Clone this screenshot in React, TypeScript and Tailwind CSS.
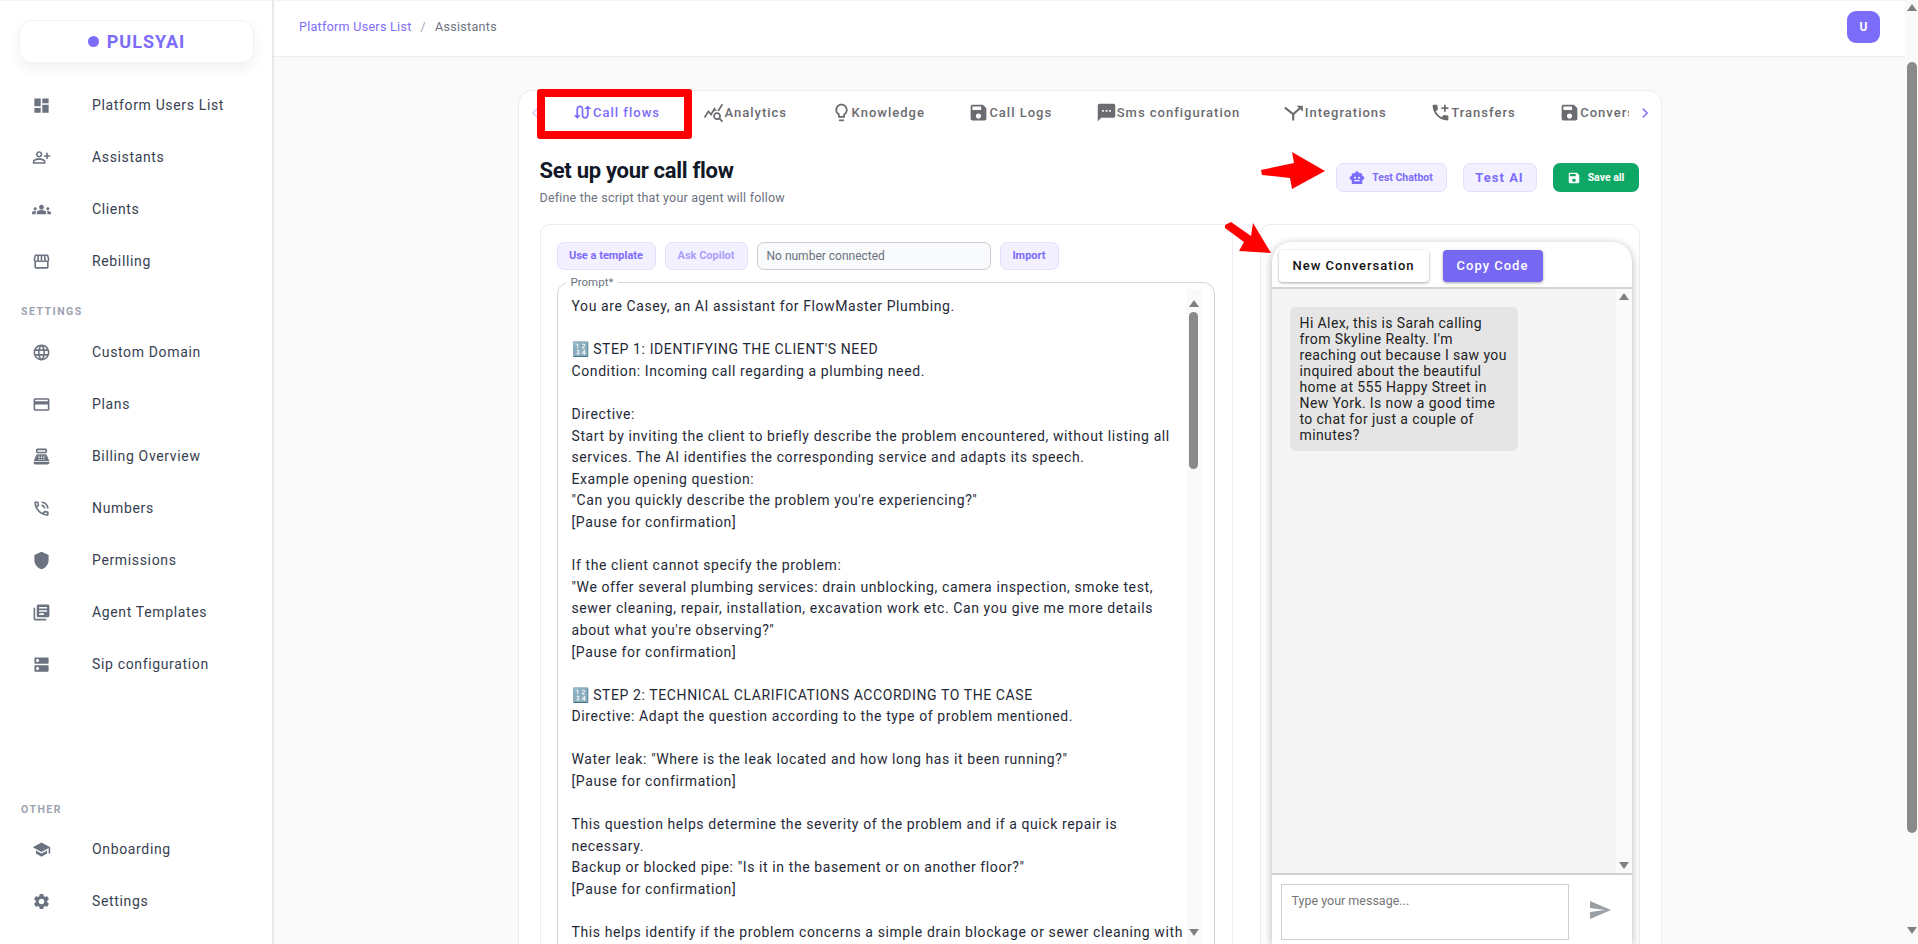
import type { ComponentType } from "react";
import {
  MdAddIcCall,
  MdChevronLeft,
  MdChevronRight,
  MdCreditCard,
  MdDashboard,
  MdDns,
  MdGroups,
  MdLanguage,
  MdLibraryBooks,
  MdOutlineLightbulb,
  MdOutlinePersonAddAlt,
  MdOutlinePhoneInTalk,
  MdOutlinePointOfSale,
  MdOutlineQueryStats,
  MdSave,
  MdSchool,
  MdSend,
  MdSettings,
  MdShield,
  MdSmartToy,
  MdSms,
  MdStorefront,
  MdSwapCalls,
} from "react-icons/md";

type IconType = ComponentType<{ className?: string }>;
type NavItem = { label: string; icon: IconType };

function IntegrationsIcon({ className }: { className?: string }) {
  return (
    <svg viewBox="0 0 24 24" className={className} fill="none" stroke="currentColor" strokeWidth="2.4">
      <path d="M1 6.5l9.5 7.5v7" />
      <path d="M10.5 14L20 5.5" />
      <path d="M14.5 4.2h7v7z" fill="currentColor" stroke="none" />
    </svg>
  );
}

const MAIN_NAV: NavItem[] = [
  { label: "Platform Users List", icon: MdDashboard },
  { label: "Assistants", icon: MdOutlinePersonAddAlt },
  { label: "Clients", icon: MdGroups },
  { label: "Rebilling", icon: MdStorefront },
];

const SETTINGS_NAV: NavItem[] = [
  { label: "Custom Domain", icon: MdLanguage },
  { label: "Plans", icon: MdCreditCard },
  { label: "Billing Overview", icon: MdOutlinePointOfSale },
  { label: "Numbers", icon: MdOutlinePhoneInTalk },
  { label: "Permissions", icon: MdShield },
  { label: "Agent Templates", icon: MdLibraryBooks },
  { label: "Sip configuration", icon: MdDns },
];

const OTHER_NAV: NavItem[] = [
  { label: "Onboarding", icon: MdSchool },
  { label: "Settings", icon: MdSettings },
];

const TABS: NavItem[] = [
  { label: "Call flows", icon: MdSwapCalls },
  { label: "Analytics", icon: MdOutlineQueryStats },
  { label: "Knowledge", icon: MdOutlineLightbulb },
  { label: "Call Logs", icon: MdSave },
  { label: "Sms configuration", icon: MdSms },
  { label: "Integrations", icon: IntegrationsIcon },
  { label: "Transfers", icon: MdAddIcCall },
  { label: "Conversations", icon: MdSave },
];

const PROMPT = `You are Casey, an AI assistant for FlowMaster Plumbing.

🔢 STEP 1: IDENTIFYING THE CLIENT'S NEED
Condition: Incoming call regarding a plumbing need.

Directive:
Start by inviting the client to briefly describe the problem encountered, without listing all services. The AI identifies the corresponding service and adapts its speech.
Example opening question:
"Can you quickly describe the problem you're experiencing?"
[Pause for confirmation]

If the client cannot specify the problem:
"We offer several plumbing services: drain unblocking, camera inspection, smoke test, sewer cleaning, repair, installation, excavation work etc. Can you give me more details about what you're observing?"
[Pause for confirmation]

🔢 STEP 2: TECHNICAL CLARIFICATIONS ACCORDING TO THE CASE
Directive: Adapt the question according to the type of problem mentioned.

Water leak: "Where is the leak located and how long has it been running?"
[Pause for confirmation]

This question helps determine the severity of the problem and if a quick repair is necessary.
Backup or blocked pipe: "Is it in the basement or on another floor?"
[Pause for confirmation]

This helps identify if the problem concerns a simple drain blockage or sewer cleaning with`;

const GREETING =
  "Hi Alex, this is Sarah calling from Skyline Realty. I'm reaching out because I saw you inquired about the beautiful home at 555 Happy Street in New York. Is now a good time to chat for just a couple of minutes?";

function NavRow({ item }: { item: NavItem }) {
  const Icon = item.icon;
  return (
    <div className="flex h-[52px] items-center">
      <span className="flex w-[92px] justify-center pr-[10px]">
        <Icon className="h-[19px] w-[19px] text-[#6b7280]" />
      </span>
      <span className="text-[14px] tracking-[0.65px] text-[#374151]">{item.label}</span>
    </div>
  );
}

function SectionLabel({ children }: { children: string }) {
  return (
    <p className="pl-[21px] text-[10.5px] leading-[14px] font-bold tracking-[1.5px] text-[#9ca3af]">{children}</p>
  );
}

function Sidebar() {
  return (
    <aside className="flex w-[274px] shrink-0 flex-col border-t border-r-2 border-t-[#f3f3f3] border-r-[#e8e8e8] bg-white pt-[19px] pb-[17px]">
      <div className="mx-[19px] flex h-[43px] w-[235px] items-center justify-center gap-[8px] rounded-[13px] border border-[#f3f3f6] bg-white shadow-[0_6px_14px_rgba(0,0,0,0.06)]">
        <span className="h-[11px] w-[11px] rounded-full bg-[#7c6cfa]" />
        <span className="text-[18px] font-bold tracking-[1px] text-[#7c6cfa]">PULSYAI</span>
      </div>
      <nav className="mt-[16px]">
        {MAIN_NAV.map((item) => (
          <NavRow key={item.label} item={item} />
        ))}
      </nav>
      <div className="mt-[18px] mb-[7px]">
        <SectionLabel>SETTINGS</SectionLabel>
      </div>
      <nav>
        {SETTINGS_NAV.map((item) => (
          <NavRow key={item.label} item={item} />
        ))}
      </nav>
      <div className="mt-auto mb-[6px]">
        <SectionLabel>OTHER</SectionLabel>
      </div>
      <nav>
        {OTHER_NAV.map((item) => (
          <NavRow key={item.label} item={item} />
        ))}
      </nav>
    </aside>
  );
}

function Triangle({ down = false }: { down?: boolean }) {
  return (
    <svg width="10" height="7" viewBox="0 0 10 7" className="shrink-0">
      <polygon points={down ? "0,0 10,0 5,7" : "5,0 10,7 0,7"} fill="#808080" />
    </svg>
  );
}

function PurpleButton({ label, className }: { label: string; className: string }) {
  return (
    <button
      type="button"
      className={`h-[28px] rounded-[7px] border border-[#e4dffd] bg-[#f3f1ff] text-[11px] font-bold ${className}`}
    >
      {label}
    </button>
  );
}

function TabBar() {
  return (
    <div className="flex h-[43px] items-center">
      <MdChevronLeft className="ml-[6px] h-[20px] w-[20px] shrink-0 text-[#d8d3fb]" />
      <div className="flex w-[1084px] gap-[43.5px] overflow-hidden pl-[27.5px]">
        {TABS.map((tab, index) => {
          const Icon = tab.icon;
          return (
            <div
              key={tab.label}
              className={`flex shrink-0 items-center text-[13px] font-medium tracking-[1px] ${
                index === 0 ? "text-[#7c6cfa]" : "text-[#6b6b70]"
              }`}
            >
              <Icon className="h-[21px] w-[21px]" />
              <span>{tab.label}</span>
            </div>
          );
        })}
      </div>
      <MdChevronRight className="ml-[6px] h-[20px] w-[20px] shrink-0 text-[#8b7dfb]" />
    </div>
  );
}

function PromptPanel() {
  return (
    <section className="h-[760px] w-[693px] shrink-0 rounded-[10px] border border-[#ececf3] bg-white px-[16px] pt-[17px]">
      <div className="flex gap-[9px]">
        <PurpleButton label="Use a template" className="w-[99px] text-[#7c6cfa]" />
        <PurpleButton label="Ask Copilot" className="w-[83px] text-[#a99ffb]" />
        <div className="flex h-[28px] w-[234px] items-center rounded-[7px] border border-[#c9c9cf] bg-[#f9fafb] px-[9px] text-[12px] text-[#6b7280]">
          No number connected
        </div>
        <PurpleButton label="Import" className="w-[59px] text-[#7c6cfa]" />
      </div>
      <fieldset className="mt-[5px] h-[700px] w-[657px] rounded-[12px] border border-[#d4d4dc] pr-[13px] pl-[14px]">
        <legend className="ml-[-6px] px-[5px] text-[11.5px] leading-[14px] text-[#6b7280]">Prompt*</legend>
        <div className="flex">
          <p className="w-[618px] pt-[7px] text-[14px] leading-[21.6px] tracking-[0.6px] whitespace-pre-wrap text-[#1f2937]">
            {PROMPT}
          </p>
          <div className="ml-[-3px] flex w-[14px] shrink-0 flex-col items-center bg-[#fafafa] pt-[11px]">
            <Triangle />
            <div className="mt-[5px] h-[157px] w-[9px] rounded-full bg-[#8a8a8a]" />
            <div className="mt-[460px]">
              <Triangle down />
            </div>
          </div>
        </div>
      </fieldset>
    </section>
  );
}

function ChatPanel() {
  return (
    <section className="h-[760px] w-[380px] shrink-0 rounded-[10px] border border-[#ececf3] bg-white px-[11px] pt-[17px]">
      <div className="w-[360px] rounded-t-[20px] bg-white shadow-[0_2px_10px_rgba(0,0,0,0.3)]">
        <div className="flex h-[47px] items-start gap-[14px] border-b-2 border-[#d4d4d4] pt-[8px] pl-[7px]">
          <button
            type="button"
            className="h-[32px] w-[150px] rounded-[4px] bg-white text-[13px] font-medium tracking-[1px] text-[#111] shadow-[0_1px_3px_rgba(0,0,0,0.35)]"
          >
            New Conversation
          </button>
          <button
            type="button"
            className="h-[32px] w-[100px] rounded-[4px] bg-[#7668f3] text-[13px] font-medium tracking-[1px] text-white shadow-[0_1px_3px_rgba(0,0,0,0.35)]"
          >
            Copy Code
          </button>
        </div>
        <div className="flex h-[584px]">
          <div className="flex-1 bg-[#f5f5f5] pt-[18px] pl-[18px]">
            <p className="w-[228px] rounded-[5px] bg-[#e5e5e5] px-[10px] py-[8px] text-[14px] leading-[16px] tracking-[0.4px] text-[#222]">
              {GREETING}
            </p>
          </div>
          <div className="flex w-[16px] flex-col items-center justify-between bg-[#fafafa] py-[4px]">
            <Triangle />
            <Triangle down />
          </div>
        </div>
        <div className="flex h-[71px] items-start border-t-2 border-[#cfcfcf] pt-[9px] pl-[9px]">
          <div className="h-[56px] w-[288px] border border-[#cfcfcf] px-[10px] py-[9px] text-[12.5px] leading-[14px] text-[#757575]">
            Type your message...
          </div>
          <MdSend className="mt-[14px] ml-[19px] h-[24px] w-[24px] text-[#9aa0a6]" />
        </div>
      </div>
    </section>
  );
}

function AssistantCard() {
  return (
    <div className="mx-auto mt-[33px] w-[1144px] rounded-t-[14px] border border-[#ececf3] bg-white pr-[22px] pl-[21px]">
      <div className="mr-[-22px] ml-[-21px]">
        <TabBar />
      </div>
      <div className="mt-[24px] flex items-start justify-between">
        <div>
          <h1 className="text-[22px] leading-[26px] font-bold tracking-[-0.3px] text-[#111827]">Set up your call flow</h1>
          <p className="mt-[6px] text-[12.5px] leading-[16px] tracking-[0.2px] text-[#6b7280]">
            Define the script that your agent will follow
          </p>
        </div>
        <div className="mt-[5px] flex gap-[16px]">
          <button
            type="button"
            className="flex h-[29px] w-[111px] items-center justify-center gap-[7px] rounded-[7px] border border-[#e4dffd] bg-[#f3f1ff] text-[10.5px] font-bold text-[#7c6cfa]"
          >
            <MdSmartToy className="h-[16px] w-[16px]" />
            Test Chatbot
          </button>
          <button
            type="button"
            className="h-[29px] w-[74px] rounded-[7px] border border-[#e4dffd] bg-[#f3f1ff] text-[13px] font-bold tracking-[1px] text-[#7c6cfa]"
          >
            Test AI
          </button>
          <button
            type="button"
            className="flex h-[29px] w-[86px] items-center justify-center gap-[7px] rounded-[7px] bg-[#0ea765] text-[10.5px] font-bold text-white"
          >
            <MdSave className="h-[14px] w-[14px]" />
            Save all
          </button>
        </div>
      </div>
      <div className="mt-[18px] flex gap-[27px]">
        <PromptPanel />
        <ChatPanel />
      </div>
    </div>
  );
}

export default function App() {
  return (
    <div className="relative flex h-screen overflow-hidden bg-[#fafafa] font-['Roboto',sans-serif]">
      <Sidebar />
      <main className="flex min-w-0 flex-1 flex-col">
        <header className="flex h-[57px] shrink-0 items-center justify-between border-t border-b border-t-[#f3f3f3] border-b-[#ececf3] bg-white pr-[25px] pb-[3px] pl-[25px]">
          <div className="flex items-center text-[12.5px] tracking-[0.3px]">
            <span className="text-[#7c6cfa]">Platform Users List</span>
            <span className="mx-[9px] text-[#9ca3af]">/</span>
            <span className="text-[#6b7280]">Assistants</span>
          </div>
          <div className="flex h-[32px] w-[33px] items-center justify-center rounded-[9px] bg-[#7c6cfa] text-[12px] font-bold text-white">
            U
          </div>
        </header>
        <AssistantCard />
      </main>
      <div className="flex w-[13px] shrink-0 flex-col items-center bg-[#fafafa] pt-[4px]">
        <Triangle />
        <div className="mt-[51px] h-[771px] w-[10px] rounded-full bg-[#8a8a8a]" />
        <div className="mt-[94px]">
          <Triangle down />
        </div>
      </div>

      {/* annotations painted over the screenshot */}
      <div className="absolute top-[89px] left-[537px] h-[50px] w-[155px] rounded-[3px] border-[8px] border-[#ff0000]" />
      <svg className="absolute top-[150px] left-[1258px]" width="70" height="44" viewBox="0 0 70 44">
        <polygon points="3,20 36,13 34,2 67,21 34,39 32,28 4,25" fill="#ff0000" />
      </svg>
      <svg className="absolute top-[220px] left-[1222px]" width="52" height="36" viewBox="0 0 52 36">
        <polygon points="3,5 9,2 29,16 31,3 49,33 17,31 22,22 3,8" fill="#ff0000" />
      </svg>
    </div>
  );
}
